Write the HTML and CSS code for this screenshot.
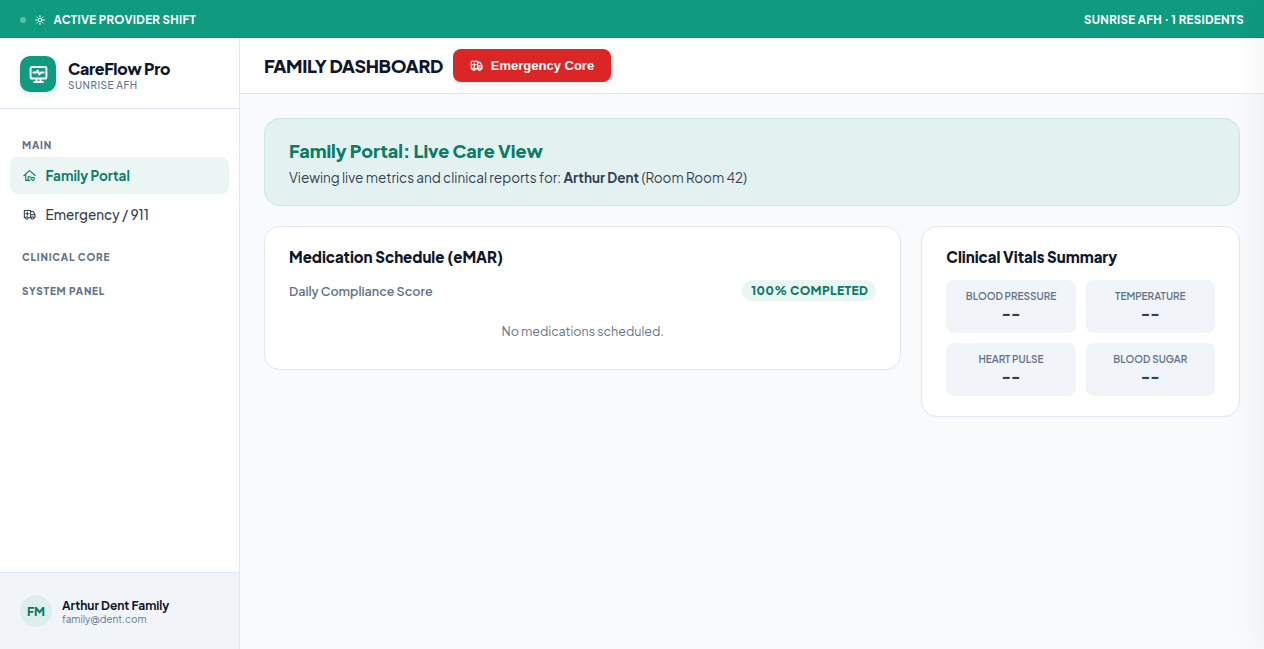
FILE: index.html
```html
<!DOCTYPE html>
<html lang="en">
<head>
  <meta charset="UTF-8">
  <meta name="viewport" content="width=device-width, initial-scale=1.0">
  <title>CareFlow Pro</title>
  <link rel="stylesheet" href="styles.css">
</head>
<body>
  <!-- shared icons -->
  <svg class="icon-defs" aria-hidden="true">
    <symbol id="ambulance" viewBox="0 0 24 24">
      <path d="M4 18H2.500V4.500H14V18h-4M14 6.500h5l3 5v6.500h-1.500M14 12.500h8M8 7.500v6M5 10.500h6"/>
      <circle cx="7" cy="18.500" r="2.300"/>
      <circle cx="17.500" cy="18.500" r="2.300"/>
    </symbol>
  </svg>

  <div class="shift-bar">
    <div class="shift-status">
      <span class="shift-dot"></span>
      <svg class="icon sun" viewBox="0 0 24 24">
        <circle cx="12" cy="12" r="4.500"/>
        <path d="M12 1.500v3M12 19.500v3M1.500 12h3M19.500 12h3M4.600 4.600l2 2M17.400 17.400l2 2M4.600 19.400l2-2M17.400 6.600l2-2"/>
      </svg>
      <span class="shift-label">ACTIVE PROVIDER SHIFT</span>
    </div>
    <span class="shift-facility">SUNRISE AFH · 1 RESIDENTS</span>
  </div>

  <div class="app">
    <aside class="sidebar">
      <div class="brand">
        <div class="brand-logo">
          <svg class="icon" viewBox="0 0 24 24">
            <rect x="2" y="2.500" width="20" height="14.500" rx="2"/>
            <path d="M5.500 9.500h3.500l2-2.500 2 5 2-2.500h3.500M9.500 17v4M14.500 17v4M6.500 21.500h11"/>
          </svg>
        </div>
        <div class="brand-text">
          <div class="brand-name">CareFlow Pro</div>
          <div class="brand-sub">SUNRISE AFH</div>
        </div>
      </div>

      <nav class="nav">
        <div class="nav-title">MAIN</div>
        <a class="nav-item active">
          <svg class="icon" viewBox="0 0 24 24">
            <path d="M1.500 12.500L12 3l10.500 9M5 10v11h7M9.500 21v-6.500h4"/>
            <path d="M18 21.500l-3-3a1.800 1.800 0 0 1 3-2.200 1.800 1.800 0 0 1 3 2.200z"/>
          </svg>
          <span>Family Portal</span>
        </a>
        <a class="nav-item">
          <svg class="icon"><use href="#ambulance"/></svg>
          <span>Emergency / 911</span>
        </a>
        <div class="nav-title core">CLINICAL CORE</div>
        <div class="nav-title panel">SYSTEM PANEL</div>
      </nav>

      <div class="user">
        <div class="avatar">FM</div>
        <div class="user-info">
          <div class="user-name">Arthur Dent Family</div>
          <div class="user-email">family@dent.com</div>
        </div>
      </div>
    </aside>

    <main class="main">
      <header class="header">
        <h1>FAMILY DASHBOARD</h1>
        <button class="emergency-btn">
          <svg class="icon"><use href="#ambulance"/></svg>
          Emergency Core
        </button>
      </header>

      <div class="content">
        <section class="banner">
          <h2>Family Portal: Live Care View</h2>
          <p>Viewing live metrics and clinical reports for: <strong>Arthur Dent</strong> (Room Room 42)</p>
        </section>

        <div class="grid">
          <section class="card meds">
            <h3>Medication Schedule (eMAR)</h3>
            <div class="score">
              <span class="score-label">Daily Compliance Score</span>
              <span class="badge">100% COMPLETED</span>
            </div>
            <p class="empty">No medications scheduled.</p>
          </section>

          <section class="card vitals-card">
            <h3>Clinical Vitals Summary</h3>
            <div class="vitals">
              <div class="vital">
                <div class="vital-label">BLOOD PRESSURE</div>
                <div class="vital-value">--</div>
              </div>
              <div class="vital">
                <div class="vital-label">TEMPERATURE</div>
                <div class="vital-value">--</div>
              </div>
              <div class="vital">
                <div class="vital-label">HEART PULSE</div>
                <div class="vital-value">--</div>
              </div>
              <div class="vital">
                <div class="vital-label">BLOOD SUGAR</div>
                <div class="vital-value">--</div>
              </div>
            </div>
          </section>
        </div>
      </div>
    </main>
  </div>

  <!-- closed drawer, only its shadow reaches the page -->
  <div class="drawer"></div>
</body>
</html>
```
FILE: styles.css
```css
:root {
  --primary: #0f9b80;
  --primary-dark: #0b7c67;
  --text: #0f172a;
  --text-mid: #334155;
  --muted: #64748b;
  --border: #e2e8f0;
  --soft: #f1f5f9;
}

* {
  margin: 0;
  padding: 0;
  box-sizing: border-box;
}

body {
  height: 100vh;
  display: flex;
  flex-direction: column;
  overflow: hidden;
  background: #f8fafc;
  color: var(--text);
  font-family: "Plus Jakarta Sans", Inter, sans-serif;
}

.icon-defs {
  position: absolute;
  width: 0;
  height: 0;
}

.icon {
  fill: none;
  stroke: currentColor;
  stroke-width: 2;
  stroke-linecap: round;
  stroke-linejoin: round;
  flex-shrink: 0;
}

/* top bar */
.shift-bar {
  height: 38px;
  flex-shrink: 0;
  display: flex;
  align-items: center;
  justify-content: space-between;
  padding: 2px 20px 0;
  background: var(--primary);
  border-bottom: 1px solid #0e9078;
  color: #fff;
  font-size: 11.5px;
  font-weight: 700;
  letter-spacing: 0.3px;
}

.shift-status {
  display: flex;
  align-items: center;
}

.shift-dot {
  width: 6px;
  height: 6px;
  margin-right: 9px;
  border-radius: 50%;
  background: rgba(255, 255, 255, 0.35);
}

.sun {
  width: 10px;
  height: 10px;
  margin-right: 8.5px;
  stroke-width: 2.4;
}

/* layout */
.app {
  flex: 1;
  display: flex;
  min-height: 0;
}

.sidebar {
  width: 240px;
  flex-shrink: 0;
  display: flex;
  flex-direction: column;
  background: #fff;
  border-right: 1px solid var(--border);
}

.brand {
  height: 71px;
  display: flex;
  align-items: center;
  gap: 12px;
  padding: 2px 20px 0;
  border-bottom: 1px solid var(--border);
}

.brand-logo {
  width: 36px;
  height: 36px;
  display: flex;
  align-items: center;
  justify-content: center;
  border-radius: 10px;
  background: var(--primary);
  color: #fff;
  box-shadow: 0 4px 10px rgba(15, 155, 128, 0.1);
}

.brand-logo .icon {
  width: 19px;
  height: 19px;
  stroke-width: 2.5;
}

.brand-text {
  padding-top: 4px;
}

.brand-name {
  font-size: 16px;
  font-weight: 800;
  line-height: 18px;
  letter-spacing: -0.3px;
}

.brand-sub {
  color: var(--muted);
  font-size: 10px;
  font-weight: 500;
  line-height: 14px;
  letter-spacing: 0.5px;
}

.nav {
  flex: 1;
  padding: 29px 10px 0;
}

.nav-title {
  padding-left: 12px;
  color: var(--muted);
  font-size: 10px;
  font-weight: 800;
  line-height: 14px;
  letter-spacing: 0.8px;
}

.nav-title.core {
  margin-top: 17px;
}

.nav-title.panel {
  margin-top: 20px;
}

.nav-item {
  height: 37px;
  display: flex;
  align-items: center;
  gap: 10px;
  margin-bottom: 2px;
  padding-left: 12.5px;
  border-radius: 8px;
  color: var(--text-mid);
  font-size: 13.5px;
  font-weight: 500;
}

.nav-title + .nav-item {
  margin-top: 5px;
}

.nav-item .icon {
  width: 13px;
  height: 13px;
}

.nav-item.active {
  background: #ebf6f4;
  color: var(--primary-dark);
  font-weight: 700;
}

.user {
  height: 77px;
  display: flex;
  align-items: center;
  gap: 10px;
  padding: 0 20px;
  background: var(--soft);
  border-top: 1px solid var(--border);
}

.avatar {
  width: 32px;
  height: 32px;
  display: flex;
  align-items: center;
  justify-content: center;
  border-radius: 50%;
  background: #deeeed;
  color: var(--primary-dark);
  font-size: 12px;
  font-weight: 800;
}

.user-info {
  padding-top: 2px;
}

.user-name {
  font-size: 12px;
  font-weight: 700;
  line-height: 15px;
}

.user-email {
  color: var(--muted);
  font-size: 10px;
  line-height: 13px;
}

/* main area */
.main {
  flex: 1;
  min-width: 0;
}

.header {
  height: 56px;
  display: flex;
  align-items: center;
  gap: 10px;
  padding: 0 24px;
  background: #fff;
  border-bottom: 1px solid var(--border);
}

.header h1 {
  width: 179px;
  font-size: 18px;
  font-weight: 800;
  letter-spacing: -0.36px;
  white-space: nowrap;
}

.emergency-btn {
  width: 158px;
  height: 33px;
  display: flex;
  align-items: center;
  justify-content: center;
  gap: 8px;
  border: none;
  border-radius: 8px;
  background: #dc2626;
  color: #fff;
  font: bold 13px "Liberation Sans", Arial, sans-serif;
  box-shadow: 0 4px 10px rgba(220, 38, 38, 0.08);
}

.emergency-btn .icon {
  width: 13px;
  height: 13px;
  stroke-width: 2.4;
}

.content {
  padding: 24px;
}

.banner {
  height: 88px;
  margin-bottom: 20px;
  padding: 19px 24px;
  border: 1px solid #c6e6df;
  border-radius: 16px;
  background: #e3f2f0;
}

.banner h2 {
  color: var(--primary-dark);
  font-size: 18px;
  font-weight: 800;
  line-height: 25px;
}

.banner p {
  color: var(--text-mid);
  font-size: 13.5px;
  line-height: 29px;
}

.grid {
  display: grid;
  grid-template-columns: 2fr 1fr;
  gap: 20px;
  align-items: start;
}

.card {
  padding: 20px 24px;
  border: 1px solid var(--border);
  border-radius: 16px;
  background: #fff;
  box-shadow: 0 1px 3px rgba(15, 23, 42, 0.02);
}

.card h3 {
  font-size: 15px;
  font-weight: 800;
  line-height: 19px;
}

.meds {
  height: 144px;
}

.score {
  display: flex;
  align-items: center;
  justify-content: space-between;
  margin-top: 14px;
}

.score-label {
  color: var(--muted);
  font-size: 12.5px;
  font-weight: 600;
}

.badge {
  padding: 0 8px 0 9px;
  border-radius: 11px;
  background: #ebf6f4;
  color: var(--primary-dark);
  font-size: 12px;
  font-weight: 800;
  line-height: 21px;
  letter-spacing: 0.4px;
}

.empty {
  margin-top: 22px;
  color: var(--muted);
  font-size: 12.5px;
  line-height: 17px;
  text-align: center;
}

.vitals {
  display: grid;
  grid-template-columns: 1fr 1fr;
  gap: 10px;
  margin-top: 14px;
}

.vital {
  height: 53px;
  padding-top: 10px;
  border-radius: 8px;
  background: var(--soft);
  text-align: center;
}

.vital-label {
  color: var(--muted);
  font-size: 10px;
  font-weight: 600;
  line-height: 13px;
}

.vital-value {
  color: var(--text-mid);
  font-size: 15px;
  font-weight: 800;
  line-height: 20px;
}

.drawer {
  position: fixed;
  top: 0;
  right: -400px;
  width: 400px;
  height: 100vh;
  background: #fff;
  box-shadow: -4px 0 30px rgba(15, 23, 42, 0.05);
}
```
